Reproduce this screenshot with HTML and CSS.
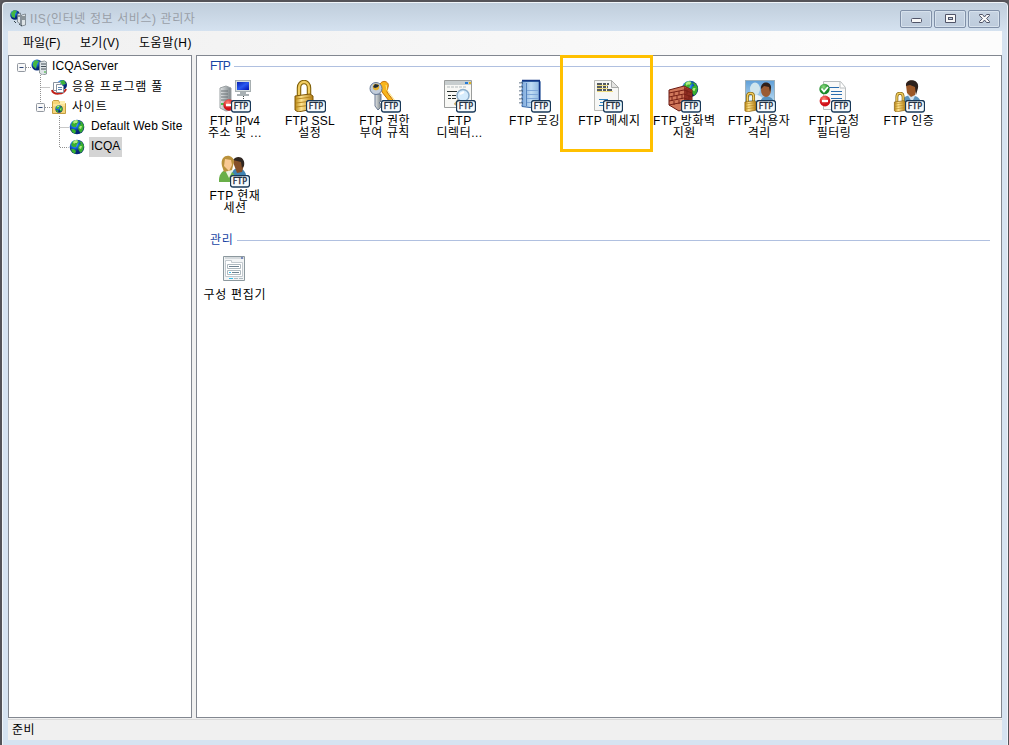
FILE: index.html
```html
<!DOCTYPE html>
<html lang="ko">
<head>
<meta charset="utf-8">
<title>IIS(인터넷 정보 서비스) 관리자</title>
<link rel="stylesheet" href="styles.css">
</head>
<body>
<svg class="defs" width="0" height="0">
  <defs>
    <linearGradient id="gold" x1="0" x2="1"><stop offset="0" stop-color="#b8860f"/><stop offset=".35" stop-color="#ffe490"/><stop offset="1" stop-color="#b07a10"/></linearGradient>
    <linearGradient id="steel" x1="0" x2="1"><stop offset="0" stop-color="#e4e7e8"/><stop offset="1" stop-color="#7c8488"/></linearGradient>
    <linearGradient id="screen" x1="0" x2="1" y2="1"><stop offset="0" stop-color="#0820b0"/><stop offset=".5" stop-color="#2858f0"/><stop offset="1" stop-color="#0010b0"/></linearGradient>
    <linearGradient id="book" x1="0" x2="1"><stop offset="0" stop-color="#7aa6da"/><stop offset=".5" stop-color="#c0dcf4"/><stop offset="1" stop-color="#8bb4e0"/></linearGradient>
    <linearGradient id="sky" x2="0" y2="1"><stop offset="0" stop-color="#5f9fd8"/><stop offset="1" stop-color="#cfe9f8"/></linearGradient>
    <radialGradient id="sea" cx=".35" cy=".3"><stop offset="0" stop-color="#9ce4ff"/><stop offset=".5" stop-color="#1870e0"/><stop offset="1" stop-color="#052878"/></radialGradient>
    <radialGradient id="red" cx=".4" cy=".3"><stop offset="0" stop-color="#ff8878"/><stop offset="1" stop-color="#d01018"/></radialGradient>
    <radialGradient id="green" cx=".4" cy=".3"><stop offset="0" stop-color="#8cdc80"/><stop offset="1" stop-color="#188828"/></radialGradient>
    <symbol id="ftp" viewBox="0 0 20 13">
      <rect x=".5" y=".5" width="19" height="11.500" rx="2.500" fill="#f6fafc" stroke="#183858" stroke-width="1.3"/>
      <text class="ftp-text" x="2.700" y="9.200" textLength="14.5" lengthAdjust="spacing">FTP</text>
    </symbol>
    <symbol id="globe" viewBox="0 0 16 16">
      <circle cx="8" cy="8" r="7.3" fill="url(#sea)"/>
      <path d="M4 2 8 1l2 2-2 2-1 3-3 0-2-2ZM10 2l3 1 2 4-1 4-2 3-2-2-1-3 1-3 2-1ZM2 10l3 0 2 2-1 3-3-2Z" fill="#38b030"/>
      <path d="m6 1 3 .5L8 4 6 4 5 5 4 3ZM11 7l2 0-1 3-2-1Z" fill="#b0ec80"/>
    </symbol>
    <symbol id="lock" viewBox="0 0 20 32">
      <path d="M5 16V8C5 0 15 0 15 8v8" fill="none" stroke="#806008" stroke-width="4.500"/>
      <path d="M5 16V8C5 0 15 0 15 8v8" fill="none" stroke="#f1cd61" stroke-width="2.300"/>
      <path d="m1 16 15-2 3 2v13l-15 3-3-2Z" fill="url(#gold)" stroke="#80590b"/>
      <path d="m2 19 16-2M2 23l16-2M2 27l16-2" stroke="#b78720"/>
    </symbol>
    <symbol id="server" viewBox="0 0 16 16">
      <circle cx="6" cy="6" r="5.500" fill="url(#sea)"/><path d="M2 4 4 1l4 1-2 3-1 5-3-3Z" fill="#45b742"/>
      <path d="m8.500 3 5-1 2 1v12l-4 1-3-2Z" fill="#dde3e6" stroke="#788488" stroke-width=".8"/>
      <path d="M10 5h5M10 7.500h5M10 10h5" stroke="#445058"/><path d="M13 13h2" stroke="#30b030"/>
    </symbol>
  </defs>
</svg>
<div class="window">
  <header class="titlebar">
    <svg class="app-icon" width="16" height="18" viewBox="0 0 16 18"><circle cx="5" cy="6" r="4.800" fill="url(#sea)"/><path d="m1 4 3-3 3 1-2 3v4L2 8Z" fill="#45b742"/><path d="m7.500 5 3-1v11l-3-2ZM11.500 6l4-1v11l-4 1Z" fill="#dde3e6" stroke="#667078" stroke-width=".7"/><path d="M12 8h3M12 10h3M8 7h2M4 12l2 2M9 15l3 2" stroke="#39464e"/></svg>
    <h1 class="title">IIS(인터넷 정보 서비스) 관리자</h1>
    <div class="controls">
      <span class="control"><svg width="13" height="12"><rect x="1.500" y="5.500" width="10" height="4" rx="1" fill="#f8f8f8" stroke="#505468"/></svg></span>
      <span class="control"><svg width="13" height="12"><path d="M1.500 1.500h10v8h-10Z" fill="#f8f8f8" stroke="#505468"/><rect x="4.500" y="4.500" width="4" height="2" fill="#c0d0e0" stroke="#505468"/></svg></span>
      <span class="control"><svg width="13" height="12"><path d="M1.500 1.500h3L6.500 4l2-2.500h3v1L8.600 5.500l2.900 3v1h-3l-2-2.500-2 2.500h-3v-1l2.900-3-2.900-3Z" fill="#f8f8f8" stroke="#505468"/></svg></span>
    </div>
  </header>
  <nav class="menu"><span class="m-file">파일(F)</span><span class="m-view">보기(V)</span><span class="m-help">도움말(H)</span></nav>
  <main class="panes">
    <aside class="tree">
      <svg class="branches" width="100" height="110"><g fill="none" stroke="#909090" stroke-dasharray="1 1"><path d="M17 11.500h6M31.500 19v28M31.500 31.500h10M36 51.500h7M50.500 60v31.500h9M50.500 71.500h9"/></g><g fill="#f8f8f8" stroke="#9298a0"><rect x="8.500" y="7.500" width="8" height="8" rx="1"/><rect x="27.500" y="47.500" width="8" height="8" rx="1"/></g><path d="M10.500 11.500h4M29.500 51.500h4" stroke="#304878"/></svg>
      <div class="node root"><svg width="16" height="16"><use href="#server"/></svg><span class="label server-name">ICQAServer</span></div>
      <div class="node level1"><svg width="16" height="16" viewBox="0 0 16 16"><circle cx="11" cy="6" r="5" fill="url(#sea)"/><path d="m9 2 4-1 2 4-4 1Z" fill="#40b33a"/><path d="M1 11c1 5 12 5 14-1" fill="none" stroke="#c02018" stroke-width="2"/><path d="M2.500 3.500h6l1 1v7h-7Z" fill="#fff" stroke="#8892a0"/><path d="M5.500 5.500h5l2 2v6h-7Z" fill="#fff" stroke="#8892a0"/><path d="M7 8.500h4M7 10.500h4" stroke="#6088b0"/></svg><span class="label pool">응용 프로그램 풀</span></div>
      <div class="node level1"><svg width="16" height="16" viewBox="0 0 16 16"><path d="M1.500 14.500v-12l1-1h5l1 2h5l1 1v10Z" fill="#f6d678" stroke="#c49e42"/><path d="M9 2h5v3H9Z" fill="#fff0b0"/><path d="M2 6h12" stroke="#fff1b5"/><use href="#globe" x="4" y="6" width="8" height="8"/></svg><span class="label sites">사이트</span></div>
      <div class="node level2"><svg width="16" height="16"><use href="#globe"/></svg><span class="label default-site">Default Web Site</span></div>
      <div class="node level2"><svg width="16" height="16"><use href="#globe"/></svg><span class="label selected">ICQA</span></div>
    </aside>
    <section class="features">
      <h2 class="group-title"><span class="ftp-group">FTP</span></h2>
      <div class="grid">
        <div class="item"><svg width="32" height="32"><path d="m1 8 6-2 5 2v22l-5 1-6-3Z" fill="url(#steel)" stroke="#9ba1a3"/><path d="M2 11h7M2 14h7M2 17h7M2 20h7" stroke="#6b7376"/><path d="M2 24h4" stroke="#44c050" stroke-width="2"/><rect x="16.500" y=".5" width="15" height="11" fill="#d8dfdf" stroke="#a7afb1"/><rect x="18" y="2" width="12" height="8" fill="url(#screen)"/><path d="M21 12h6v2h3v2H18v-2h3Z" fill="#a9b1b4"/><path d="M24.500 16v4" stroke="#404848" stroke-dasharray="1 1"/><circle cx="10" cy="25" r="5.700" fill="url(#red)"/><path d="M7 25h6" stroke="#fff" stroke-width="2.500"/><use href="#ftp" x="12" y="20" width="20" height="13"/></svg><span class="caption latin">FTP IPv4</span><span class="caption second">주소 및 ...</span></div>
        <div class="item"><svg width="32" height="32"><use href="#lock" width="20" height="32"/><use href="#ftp" x="12" y="20" width="20" height="13"/></svg><span class="caption latin-wide">FTP SSL</span><span class="caption second">설정</span></div>
        <div class="item"><svg width="32" height="32"><path d="M11 4c3-5 10-2 8 3l-1 5 9 12-3 2L13 12Z" fill="#f8b51d" stroke="#c46c00"/><path d="m17 5 1 5 9 12" fill="none" stroke="#ffe681"/><path d="M6 14v12l3 4 3-3v-3l-2-1 2-2V14Z" fill="url(#steel)" stroke="#6b7991"/><circle cx="7" cy="8.500" r="6" fill="#c3cddb" stroke="#657894"/><circle cx="7" cy="7" r="3.200" fill="#e5b02c"/><path d="m4 7 2-3 4 1-1 2-3 1Z" fill="#202c38"/><use href="#ftp" x="12" y="20" width="20" height="13"/></svg><span class="caption">FTP 권한<br>부여 규칙</span></div>
        <div class="item"><svg width="32" height="32"><path d="M.5.500h27v27H.5Z" fill="#f8f8f5" stroke="#9b9d9c"/><path d="M1 3h26" stroke="#c8cecf" stroke-width="4"/><path d="M21 3h3" stroke="#247ad6" stroke-width="2"/><path d="M25 3h2" stroke="#dcb421" stroke-width="2"/><path d="M3 7h20" stroke="#b3bbbd" stroke-dasharray="3 1"/><path d="M3 11.500h10M4 15.500h3M8 15.500h4M4 18.500h3M8 18.500h4" stroke="#26302f"/><path d="m15 20-4 5" stroke="#c2a25f" stroke-width="3"/><circle cx="19" cy="15.500" r="6" fill="#d5ecfc" stroke="#8eafcb" stroke-width="1.500"/><path d="m16 14 4-2" stroke="#fff" stroke-width="2"/><use href="#ftp" x="12" y="20" width="20" height="13"/></svg><span class="caption">FTP<br>디렉터...</span></div>
        <div class="item"><svg width="32" height="32"><path d="M3 1.500h18v25l-2 2-16-2Z" fill="url(#book)" stroke="#3868a8"/><path d="M7.500 3v23" stroke="#5382bd"/><path d="M8 10.500h11M8 14.500h11M8 18.500h11M8 22.500h11" stroke="#7ea6d8"/><path d="M3 .5h18M20.500 1v25" stroke="#123484" stroke-width="1.500" fill="none"/><path d="M0 3h4M0 7h4M0 11h4M0 15h4M0 19h4M0 23h4" stroke="#344a63"/><path d="M0 4h3M0 8h3M0 12h3M0 16h3M0 20h3M0 24h3" stroke="#f3f6fa"/><use href="#ftp" x="12" y="20" width="20" height="13"/></svg><span class="caption">FTP 로깅</span></div>
        <div class="item"><svg width="32" height="32"><path d="M.5.500h17l7 7v23H.5Z" fill="#f7f7f5" stroke="#b9bab6"/><path d="M17.500.5v7h7Z" fill="#e4e4e2" stroke="#a9aaa8"/><path d="M3 4h12M3 7h11M3 10h16" stroke="#202830" stroke-width="1.500" stroke-dasharray="5 1 3 1"/><path d="M3 5.500h11M3 8.500h11M3 11.500h16" stroke="#f0dd80"/><path d="M5 19.500h9M6 22.500h4M5 25.500h4" stroke="#2d80be"/><use href="#ftp" x="9" y="20" width="20" height="13"/></svg><span class="caption">FTP 메세지</span></div>
        <div class="item"><svg width="32" height="32"><use href="#globe" x="12" width="18" height="18"/><path d="m0 10 15-4 8 4v15l-13 6-10-6Z" fill="#d0775a" stroke="#6b1912"/><path d="m15 7 8 3v15l-8 4Z" fill="#8f2d22"/><path d="m0 13 15-3 8 3M0 17l15-3 8 3M0 21l15-3 8 3M0 25l15-3 8 3M5 12v4M10 11v4M3 17v4M8 16v4M13 15v4M5 21v4M10 20v4M18 10v4M20 15v4" stroke="#762016" fill="none"/><use href="#ftp" x="12" y="20" width="20" height="13"/></svg><span class="caption">FTP 방화벽<br>지원</span></div>
        <div class="item"><svg width="32" height="32"><rect x="1.500" y=".5" width="29" height="27" fill="url(#sky)" stroke="#9cb0bc"/><path d="M4 20c1-7 13-7 15 0Z" fill="#edf4f6"/><ellipse cx="11" cy="9" rx="5" ry="6.500" fill="#d0e5ed"/><path d="M17 20c2-5 11-5 13 2v5H17Z" fill="#5691bd"/><ellipse cx="22" cy="10" rx="5" ry="7" fill="#9a5b32"/><path d="M17 9c-1-9 11-8 10-1l-1 4-1-5-5-1Z" fill="#2f211c"/><use href="#lock" y="12" width="13" height="20"/><use href="#ftp" x="12" y="20" width="20" height="13"/></svg><span class="caption">FTP 사용자<br>격리</span></div>
        <div class="item"><svg width="32" height="32"><path d="M4.500 1.500h17l5 6v22h-22Z" fill="#f9f9f8" stroke="#b9bdbf"/><path d="M21 2v6h5" fill="#fff" stroke="#b9bdbf"/><path d="M10 7.500h10M12 11.500h11M12 14.500h11M12 18.500h11" stroke="#2b6dae"/><circle cx="5.500" cy="9" r="5.200" fill="url(#green)"/><path d="m2.500 8.500 2.500 3L9 7" fill="none" stroke="#fff" stroke-width="1.800"/><circle cx="6" cy="21" r="5.400" fill="url(#red)"/><path d="M3 21h6" stroke="#fff" stroke-width="2.300"/><use href="#ftp" x="12" y="20" width="20" height="13"/></svg><span class="caption">FTP 요청<br>필터링</span></div>
        <div class="item"><svg width="32" height="32"><path d="M9 22c0-8 16-10 19 0v5H9Z" fill="#5c94bd"/><path d="m14 14 5 8 4-8Z" fill="#d4e2ed"/><path d="M13 5c0-6 11-6 11 2l-2 8-4 2-4-4Z" fill="#9c5827"/><path d="M13 6c-1-8 14-8 12 2l-2 7-1-8-5-2Z" fill="#2c211d"/><use href="#lock" y="12" width="14" height="20"/><use href="#ftp" x="12" y="20" width="20" height="13"/></svg><span class="caption">FTP 인증</span></div>
        <div class="item"><svg width="32" height="32"><path d="M13 18c2-7 12-7 14 2v4H13Z" fill="#4084b3"/><path d="M14 7c1-6 11-6 11 3l-2 7-5 1Z" fill="#855028"/><path d="M14 5c4-6 13-3 11 6l-2 2-1-6Z" fill="#302722"/><path d="M0 24c1-11 14-13 17 0l-4 3H0Z" fill="#69af48"/><path d="m6 15 4 8 4-8Z" fill="#eef2de"/><path d="M3 11C0-2 15-2 15 7l-2 8-8 2Z" fill="#ba923c"/><path d="m6 4 6 1 1 5-3 6-5-5Z" fill="#f9c994"/><use href="#ftp" x="11" y="20" width="20" height="13"/></svg><span class="caption">FTP 현재<br>세션</span></div>
      </div>
      <h2 class="group-title management">관리</h2>
      <div class="grid admin"><div class="item"><svg width="32" height="32"><path d="M4.500 2.500h21v24h-21Z" fill="#f2f4f5" stroke="#8c989e"/><path d="M6 4h19" stroke="#d5dadd" stroke-width="2"/><path d="M22 4h2" stroke="#203c9b"/><path d="M6.500 8.500v-2h6v2h11v14h-17Z" fill="#fff" stroke="#c2c9ce"/><path d="M8.500 10.500h13v4h-13ZM8.500 16.500h13v4h-13Z" fill="#fff" stroke="#aeb9bf"/><path d="M10 12.500h10M13 18.500h7" stroke="#6e8290"/><path d="M10 18.500h2M10 24.500h4" stroke="#37bde8"/><path d="M15 24.500h9" stroke="#aebbc2" stroke-dasharray="4 1"/></svg><span class="caption editor">구성 편집기</span></div></div>
      <div class="highlight"></div>
    </section>
  </main>
  <footer class="status">준비</footer>
</div>
</body>
</html>
```

FILE: styles.css
```css
* { box-sizing: border-box; }
body { margin: 0; background: #5c5b60; font: 12px/16px "Liberation Sans", "Noto Sans CJK KR", sans-serif; color: #000; overflow: hidden; }
.defs { position: absolute; }
.window { height: 745px; display: grid; grid-template-rows: 29px 24px 664px 21px 6px; padding: 0 6px; background: linear-gradient(#bfcddb, #d6e3f1 31px); border: solid #545358; border-width: 2px 1px 0 2px; border-radius: 6px 6px 0 0; box-shadow: inset 1px 1px #f0f5f9, inset -1px 0 #eef4fa; }
.titlebar { display: flex; align-items: flex-start; padding: 7px 2px 0; }
.title { flex: 1; margin: 2px 0 0 4px; font-size: 12px; line-height: 16px; font-weight: 400; color: #999fa8; letter-spacing: .6px; }
.controls { display: flex; gap: 2px; margin-top: 1px; }
.control { display: flex; justify-content: center; align-items: center; width: 32px; height: 18px; border: 1px solid #8090a8; border-radius: 2px; box-shadow: inset 0 0 0 1px #d7e2ed; background: linear-gradient(#c6d3e2, #bdcbdc); }
.menu { background: linear-gradient(90deg, #f0f0f0, #fcfcfc 85%); display: flex; padding: 4px 15px; }
.m-file { width: 57px; }
.m-view { width: 59px; letter-spacing: .3px; }
.m-help { letter-spacing: .55px; }
.panes { display: grid; grid-template-columns: 184px 806px; gap: 4px; background: #f0f0f0; }
.tree, .features { position: relative; border: 1px solid #828790; background: #fff; height: 663px; }
.tree { padding-top: 1px; }
.branches { position: absolute; left: 0; top: 0; }
.node { position: relative; height: 20px; display: flex; align-items: center; }
.root { padding-left: 22px; }
.level1 { padding-left: 42px; }
.level2 { padding-left: 60px; }
.label { padding: 0 2px; margin-left: 3px; line-height: 19px; height: 20px; white-space: nowrap; }
.pool, .sites { line-height: 20px; letter-spacing: .8px; }
.server-name { letter-spacing: .15px; }
.default-site { margin-left: 4px; letter-spacing: .1px; }
.selected { margin-left: 4px; letter-spacing: 0; background: #d4d4d4; }
.group-title { margin: 0 11px 0 13px; height: 20px; display: flex; align-items: center; gap: 4px; font-size: 12px; font-weight: 400; color: #1844a4; }
.group-title::after { content: ""; flex: 1; height: 1px; background: #b0c0e0; }
.ftp-group { letter-spacing: -1px; }
.management { height: 22px; margin-top: -1px; letter-spacing: .6px; }
.grid { display: grid; grid-template-columns: repeat(10, 74.9px); grid-auto-rows: 75px; padding: 4px 0 0 1px; }
.admin { padding-top: 3px; }
.item { display: flex; flex-direction: column; align-items: center; }
.item svg { overflow: visible; flex: none; }
.caption { margin: 3px 1px 0 0; text-align: center; white-space: nowrap; line-height: 12px; letter-spacing: .5px; }
.caption.second { margin-top: 0; }
.latin { letter-spacing: 0; }
.latin-wide { letter-spacing: .2px; }
.caption.editor { margin-top: 3px; letter-spacing: .7px; }
.ftp-text { font: 8px "DejaVu Sans", sans-serif; fill: #182838; stroke: #182838; stroke-width: .3px; }
.highlight { position: absolute; left: 363px; top: -1px; width: 93px; height: 97px; border: 3px solid #ffc000; }
.status { background: #f0f0f0; border-top: 1px solid #d8d8d8; padding: 2px 4px; letter-spacing: .5px; }
```
